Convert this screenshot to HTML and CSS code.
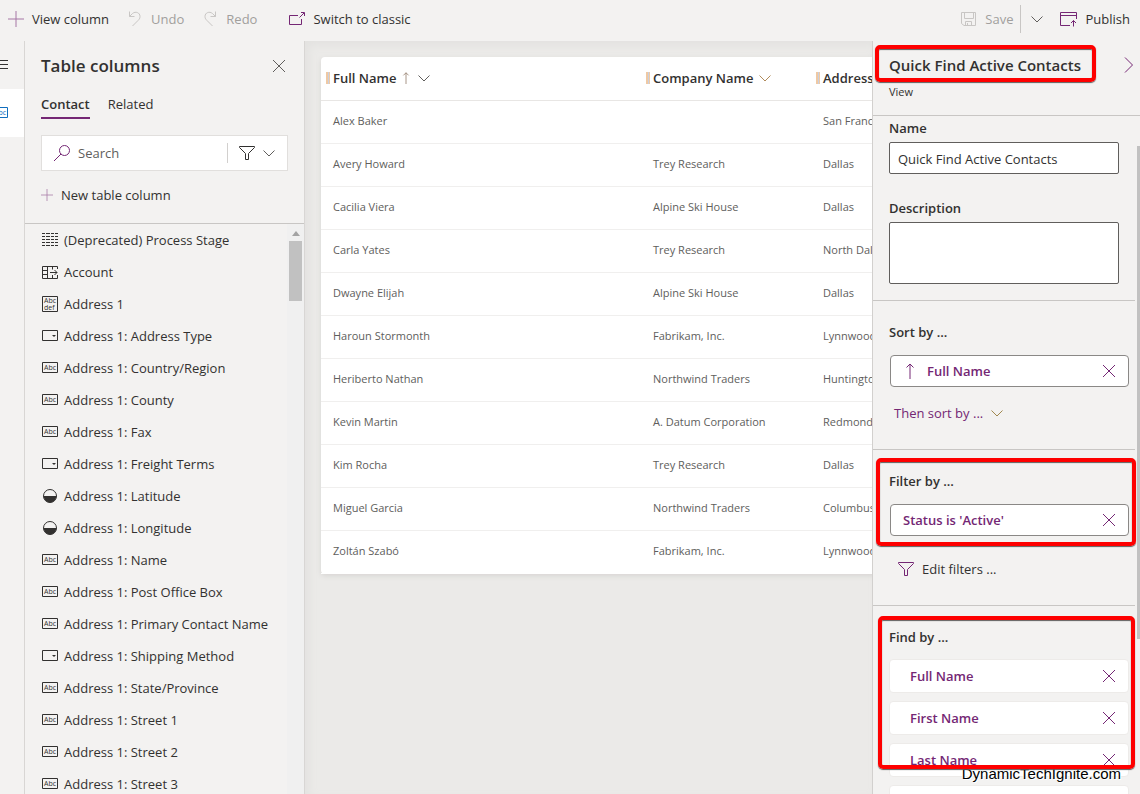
FILE: index.html
```
<!DOCTYPE html>
<html lang="en">
<head>
<meta charset="utf-8">
<title>Quick Find Active Contacts</title>
<link rel="stylesheet" href="styles.css">
</head>
<body>
<svg class="sprite" aria-hidden="true">
  <symbol id="plus" viewBox="0 0 16 16"><path d="M8 0v16M0 8h16"/></symbol>
  <symbol id="undo" viewBox="0 0 16 16"><path d="M2.500 0.500v5h5M2.500 5.500L5.500 2.500C8.500 0 13 1.500 13 5.500C13 7.500 12 8.500 11 9.500L5.500 15"/></symbol>
  <symbol id="redo" viewBox="0 0 16 16"><path d="M13.500 0.500v5h-5M13.500 5.500L10.500 2.500C7.500 0 3 1.500 3 5.500C3 7.500 4 8.500 5 9.500L10.500 15"/></symbol>
  <symbol id="popout" viewBox="0 0 16 16"><path d="M9 4.500H.5v9h12V8M10.500 6.500L15 2M12 1.500h3.500V5"/></symbol>
  <symbol id="save" viewBox="0 0 16 16"><path d="M.5 1.500h14v13H3l-2.500-2zM3.500 1.500v6h9v-6M4.500 14.500v-4h6v4M6.500 12v2.500"/></symbol>
  <symbol id="publish" viewBox="0 0 18 16"><path d="M10 14.500H.5v-13h16V8M.5 4.500h16M13.500 15.500V9.500M11 12l2.500-2.500L16 12"/></symbol>
  <symbol id="close" viewBox="0 0 12 12"><path d="M0 0l12 12M12 0L0 12"/></symbol>
  <symbol id="down" viewBox="0 0 12 12"><path d="M.5 3.500L6 9l5.500-5.500"/></symbol>
  <symbol id="right" viewBox="0 0 10 16"><path d="M1 .5L8.500 8 1 15.500"/></symbol>
  <symbol id="search" viewBox="0 0 16 16"><circle cx="10.500" cy="5.500" r="5"/><path d="M7 9L0 16"/></symbol>
  <symbol id="funnel" viewBox="0 0 16 16"><path d="M.5 1.500h15v1L9.500 8.500v6h-3v-6L.5 2.500z"/></symbol>
  <symbol id="up" viewBox="0 0 8 16"><path d="M4 16V1M.5 4.500L4 1l3.500 3.500"/></symbol>
  <symbol id="menu" viewBox="0 0 16 16"><path d="M0 3.500h16M0 7.500h16M0 11.500h16"/></symbol>
  <symbol id="stage" viewBox="0 0 16 16"><path stroke-dasharray="3 1 4 1 3 1 3 0" d="M0 1.500h16M0 4.500h16M0 7.500h16M0 10.500h16M0 13.500h16"/></symbol>
  <symbol id="lookup" viewBox="0 0 16 16"><path d="M15.500 5V2.500H.5v12h15V11M.5 6.500h5M.5 10.500h5M5.500 2.500v12M10.500 2.500v3M10.500 11v3.500M8 8.500h7M12.500 6l2.500 2.500-2.500 2.500"/></symbol>
  <symbol id="option" viewBox="0 0 16 16"><path d="M.5 2.500h15v10H.5z"/><path class="solid" d="M10 7h4l-2 2z"/></symbol>
  <symbol id="half" viewBox="0 0 16 16"><circle cx="8" cy="8" r="6.500"/><path class="solid" d="M1.500 8h13a6.500 6.500 0 0 1-13 0z"/></symbol>
  <symbol id="abc" viewBox="0 0 16 16"><path d="M.5 2.500h15v10H.5z"/><text x="2" y="10">Abc</text></symbol>
  <symbol id="abcdef" viewBox="0 0 16 16"><path d="M.5.500h15v15H.5z"/><text x="2" y="7">Abc</text><text x="2" y="14">def</text></symbol>
</svg>

<header class="commands">
  <button class="cmd"><svg class="i16 brand soft"><use href="#plus"/></svg>View column</button>
  <button class="cmd" disabled><svg class="i16"><use href="#undo"/></svg>Undo</button>
  <button class="cmd" disabled><svg class="i16"><use href="#redo"/></svg>Redo</button>
  <button class="cmd classic"><svg class="i16 brand"><use href="#popout"/></svg>Switch to classic</button>
  <span class="grow"></span>
  <button class="cmd save" disabled><svg class="i16"><use href="#save"/></svg>Save</button>
  <button class="cmd split" aria-label="Save options"><svg class="i12 thin"><use href="#down"/></svg></button>
  <button class="cmd publish"><svg class="i18 brand"><use href="#publish"/></svg>Publish</button>
</header>

<div class="workspace">
  <nav class="rail">
    <button aria-label="Menu"><svg class="i16"><use href="#menu"/></svg></button>
    <button class="current" aria-label="Columns"><svg class="i16"><use href="#abc"/></svg></button>
  </nav>

  <aside class="columns">
    <div class="columns-head">
      <div class="title-row">
        <h2>Table columns</h2>
        <button aria-label="Close"><svg class="i12 thin"><use href="#close"/></svg></button>
      </div>
      <div class="tabs"><button class="active">Contact</button><button>Related</button></div>
      <div class="search">
        <svg class="i16 brand"><use href="#search"/></svg>
        <input type="search" placeholder="Search" aria-label="Search">
        <button aria-label="Filter columns"><svg class="i16"><use href="#funnel"/></svg><svg class="i12 thin"><use href="#down"/></svg></button>
      </div>
      <button class="new"><svg class="i12 brand soft"><use href="#plus"/></svg>New table column</button>
    </div>
    <div class="list-area">
      <ul>
        <li><svg class="i16"><use href="#stage"/></svg>(Deprecated) Process Stage</li>
        <li><svg class="i16"><use href="#lookup"/></svg>Account</li>
        <li><svg class="i16"><use href="#abcdef"/></svg>Address 1</li>
        <li><svg class="i16"><use href="#option"/></svg>Address 1: Address Type</li>
        <li><svg class="i16"><use href="#abc"/></svg>Address 1: Country/Region</li>
        <li><svg class="i16"><use href="#abc"/></svg>Address 1: County</li>
        <li><svg class="i16"><use href="#abc"/></svg>Address 1: Fax</li>
        <li><svg class="i16"><use href="#option"/></svg>Address 1: Freight Terms</li>
        <li><svg class="i16"><use href="#half"/></svg>Address 1: Latitude</li>
        <li><svg class="i16"><use href="#half"/></svg>Address 1: Longitude</li>
        <li><svg class="i16"><use href="#abc"/></svg>Address 1: Name</li>
        <li><svg class="i16"><use href="#abc"/></svg>Address 1: Post Office Box</li>
        <li><svg class="i16"><use href="#abc"/></svg>Address 1: Primary Contact Name</li>
        <li><svg class="i16"><use href="#option"/></svg>Address 1: Shipping Method</li>
        <li><svg class="i16"><use href="#abc"/></svg>Address 1: State/Province</li>
        <li><svg class="i16"><use href="#abc"/></svg>Address 1: Street 1</li>
        <li><svg class="i16"><use href="#abc"/></svg>Address 1: Street 2</li>
        <li><svg class="i16"><use href="#abc"/></svg>Address 1: Street 3</li>
      </ul>
      <div class="scrollbar"><span class="arrow"></span><span class="thumb"></span></div>
    </div>
  </aside>

  <main class="canvas">
    <table class="grid">
      <colgroup><col class="c-name"><col class="c-company"><col class="c-city"></colgroup>
      <thead>
        <tr>
          <th><div class="th">Full Name<svg class="sort"><use href="#up"/></svg><svg class="i12 thin"><use href="#down"/></svg></div></th>
          <th><div class="th">Company Name<svg class="i12 amber"><use href="#down"/></svg></div></th>
          <th><div class="th">Address 1: City</div></th>
        </tr>
      </thead>
      <tbody>
        <tr><td>Alex Baker</td><td></td><td>San Francisco</td></tr>
        <tr><td>Avery Howard</td><td>Trey Research</td><td>Dallas</td></tr>
        <tr><td>Cacilia Viera</td><td>Alpine Ski House</td><td>Dallas</td></tr>
        <tr><td>Carla Yates</td><td>Trey Research</td><td>North Dallas</td></tr>
        <tr><td>Dwayne Elijah</td><td>Alpine Ski House</td><td>Dallas</td></tr>
        <tr><td>Haroun Stormonth</td><td>Fabrikam, Inc.</td><td>Lynnwood</td></tr>
        <tr><td>Heriberto Nathan</td><td>Northwind Traders</td><td>Huntington</td></tr>
        <tr><td>Kevin Martin</td><td>A. Datum Corporation</td><td>Redmond</td></tr>
        <tr><td>Kim Rocha</td><td>Trey Research</td><td>Dallas</td></tr>
        <tr><td>Miguel Garcia</td><td>Northwind Traders</td><td>Columbus</td></tr>
        <tr><td>Zoltán Szabó</td><td>Fabrikam, Inc.</td><td>Lynnwood</td></tr>
      </tbody>
    </table>
  </main>

  <aside class="props">
    <div class="props-head">
      <div class="title-row">
        <h1>Quick Find Active Contacts</h1>
        <button aria-label="Collapse"><svg class="chev brand"><use href="#right"/></svg></button>
      </div>
      <p>View</p>
      <span class="mark mark-title"></span>
    </div>
    <div class="props-body">
      <section class="fields">
        <label for="name">Name</label>
        <input id="name" type="text" value="Quick Find Active Contacts">
        <label for="desc">Description</label>
        <textarea id="desc"></textarea>
      </section>
      <section class="sorting">
        <h3>Sort by ...</h3>
        <div class="chip outlined"><svg class="sort"><use href="#up"/></svg><span>Full Name</span><button aria-label="Remove sort"><svg class="i12"><use href="#close"/></svg></button></div>
        <button class="then">Then sort by ...<svg class="i12 olive"><use href="#down"/></svg></button>
      </section>
      <section class="filtering">
        <h3>Filter by ...</h3>
        <div class="chip outlined status"><span>Status is 'Active'</span><button aria-label="Remove filter"><svg class="i12"><use href="#close"/></svg></button></div>
        <button class="edit"><svg class="i16 brand"><use href="#funnel"/></svg>Edit filters ...</button>
        <span class="mark mark-filter"></span>
      </section>
      <section class="finding">
        <h3>Find by ...</h3>
        <div class="chip"><span>Full Name</span><button aria-label="Remove Full Name"><svg class="i12"><use href="#close"/></svg></button></div>
        <div class="chip"><span>First Name</span><button aria-label="Remove First Name"><svg class="i12"><use href="#close"/></svg></button></div>
        <div class="chip"><span>Last Name</span><button aria-label="Remove Last Name"><svg class="i12"><use href="#close"/></svg></button></div>
        <div class="chip"></div>
        <span class="watermark">DynamicTechIgnite.com</span>
        <span class="mark mark-find"></span>
      </section>
      <span class="page-thumb"></span>
    </div>
  </aside>
</div>
</body>
</html>
```
FILE: styles.css
```
*, *::before { box-sizing: border-box; }
html, body { height: 100%; }
body {
  margin: 0;
  display: flex;
  flex-direction: column;
  overflow: hidden;
  background: #f3f2f1;
  color: #323130;
  font: 13px/20px "Open Sans", "Noto Sans", sans-serif;
}
h1, h2, h3, p, ul { margin: 0; padding: 0; }
button {
  display: flex;
  align-items: center;
  padding: 0;
  border: 0;
  background: none;
  color: inherit;
  font: inherit;
}
svg { flex: none; fill: none; stroke: currentColor; stroke-width: 1; }
svg text, symbol text { fill: currentColor; stroke: none; font: 7px "Open Sans", sans-serif; }
.solid { fill: currentColor; stroke: none; }
.sprite { display: none; }
.i12 { width: 12px; height: 12px; }
.i16 { width: 16px; height: 16px; }
.i18 { width: 18px; height: 16px; }
.sort { width: 8px; height: 16px; }
.chev { width: 10px; height: 16px; }
.thin { color: #605e5c; }
.brand { color: #742774; }
.soft { opacity: .6; }
.amber { color: #b08a5a; }
.olive { color: #a08850; }
.grow { flex: 1; }

/* Command bar */
.commands {
  flex: none;
  display: flex;
  align-items: center;
  gap: 18px;
  height: 41px;
  padding: 0 10px 3px 8px;
}
.cmd { gap: 8px; height: 28px; }
.cmd:disabled { color: #a19f9d; }
.cmd:disabled svg { color: #c8c6c4; }
.classic { margin-left: 14px; }
.save { padding-right: 6px; border-right: 1px solid #c8c6c4; }
.split { margin-left: -8px; }
.publish { margin-left: -1px; }

.workspace { flex: 1; display: flex; min-height: 0; }

/* Left rail */
.rail { flex: none; width: 24px; overflow: hidden; }
.rail button { width: 24px; height: 48px; }
.rail svg { margin-left: -8px; }
.rail .current { background: #fff; color: #106ebe; }

/* Table columns panel */
.columns {
  flex: none;
  display: flex;
  flex-direction: column;
  width: 281px;
  border: solid #d8d6d4;
  border-width: 0 1px;
}
.columns-head { padding: 13px 16px 18px; border-bottom: 1px solid #c8c6c4; }
.title-row { display: flex; justify-content: space-between; align-items: center; }
h2 { font-size: 17px; line-height: 24px; font-weight: 600; }
.columns .title-row button { padding-right: 3px; }
.tabs { display: flex; gap: 18px; margin-top: 16px; }
.tabs button { height: 25px; padding-bottom: 3px; border-bottom: 2px solid transparent; }
.tabs .active { font-weight: 600; border-color: #742774; }
.search {
  display: flex;
  align-items: center;
  height: 36px;
  margin-top: 16px;
  padding-left: 12px;
  border: 1px solid #e1dfdd;
  background: #fff;
}
.search input {
  flex: 1;
  min-width: 0;
  padding: 0 8px;
  border: 0;
  background: none;
  font: inherit;
}
.search input::placeholder { color: #605e5c; opacity: 1; }
.search button { gap: 8px; height: 20px; padding: 0 12px 0 11px; border-left: 1px solid #d2d0ce; }
.new { gap: 8px; margin-top: 14px; }
.list-area { flex: 1; display: flex; min-height: 0; overflow: hidden; }
.list-area ul { flex: 1; list-style: none; }
.list-area li { display: flex; align-items: center; gap: 6px; height: 32px; padding-left: 17px; white-space: nowrap; }
.scrollbar { display: flex; flex-direction: column; align-items: center; gap: 4px; width: 17px; padding-top: 7px; background: #f0f0f0; }
.arrow { border: 4px solid transparent; border-bottom: 5px solid #a3a3a3; border-top: 0; margin-bottom: 1px; }
.thumb { width: 13px; height: 60px; background: #c1c1c1; }

/* Results grid */
.canvas { flex: 1; min-width: 0; overflow: hidden; padding: 16px 0 0 16px; background: #ebeae8; box-shadow: inset 4px 4px 8px #e3e2e0; }
.grid {
  width: 640px;
  table-layout: fixed;
  border-collapse: separate;
  border-spacing: 0;
  border-radius: 4px;
  background: #fff;
  box-shadow: 0 2px 5px #d8d6d4;
}
.c-name { width: 320px; }
.c-company { width: 170px; }
.grid th { height: 44px; padding: 0 0 2px 5px; border-bottom: 1px solid #e8e6e4; text-align: left; font-weight: 600; white-space: nowrap; }
.th { display: flex; align-items: center; gap: 6px; }
.th::before { content: ""; width: 4px; height: 12px; margin-right: -3px; border: solid #efc9a4; border-width: 0 1px 0 2px; background: #c8cfdf; }
.th .sort { height: 12px; margin-right: 2px; color: #8b7460; }
.grid td { height: 43px; padding: 0 0 2px 12px; border-bottom: 1px solid #f0efee; color: #605e5c; font-size: 11px; line-height: 16px; white-space: nowrap; }
.grid tr:last-child td { border-color: #fff; }

/* View properties */
.props { flex: none; display: flex; flex-direction: column; width: 268px; border-left: 1px solid #d2d0ce; }
.props-head { position: relative; height: 75px; padding: 12px 6px 0 16px; border-bottom: 1px solid #c8c6c4; }
h1 { font-size: 15px; line-height: 24px; font-weight: 600; white-space: nowrap; }
.props-head p { margin-top: 7px; font-size: 11px; line-height: 16px; }
.props-body { position: relative; flex: 1; min-height: 0; padding-right: 5px; }
section { position: relative; padding: 0 6px 0 16px; border-bottom: 1px solid #c8c6c4; }
.fields { display: flex; flex-direction: column; padding: 2px 16px 16px; }
label, h3 { font-size: 13px; line-height: 20px; font-weight: 600; }
.fields label { margin-bottom: 4px; }
.fields input, .fields textarea {
  height: 32px;
  padding: 2px 8px 0;
  border: 1px solid #605e5c;
  border-radius: 2px;
  background: #fff;
  color: inherit;
  font: inherit;
  resize: none;
}
.fields input { margin-bottom: 24px; }
.fields textarea { height: 62px; }
section h3 { padding-top: 21px; margin-bottom: 13px; }
.chip {
  display: flex;
  align-items: center;
  height: 34px;
  margin-bottom: 8px;
  padding: 0 13px 0 20px;
  border: 1px solid #edebe9;
  border-radius: 4px;
  background: #fff;
  color: #742774;
  font-weight: 600;
}
.chip span { flex: 1; }
.outlined { height: 32px; margin-left: 1px; padding: 0 13px 0 15px; border-color: #8a8886; }
.outlined .sort { margin-right: 13px; }
.status { padding-left: 12px; }
.sorting { padding-bottom: 26px; }
.then { gap: 8px; margin: 16px 0 0 5px; color: #742774; }
.filtering { padding-bottom: 26px; }
.edit { gap: 8px; margin: 23px 0 0 9px; }
.finding { border-bottom: 0; }
.finding h3 { margin-bottom: 12px; }
.page-thumb { position: absolute; top: 30px; right: 0; width: 3px; height: 493px; background: #c1c1c1; }

/* Callouts drawn over the panel */
.mark { position: absolute; border: 4px solid #fe0000; border-radius: 5px; box-shadow: 0 1px 1px #605e5c, inset 0 1px 1px #605e5c; pointer-events: none; }
.mark-title { top: 4px; left: 2px; width: 221px; height: 37px; }
.mark-filter { top: 8px; left: 3px; right: -1px; height: 88px; }
.mark-find { top: 10px; left: 5px; right: 0; height: 153px; }
.watermark {
  position: absolute;
  top: 158px;
  right: 14px;
  color: #000;
  font: 15px/20px "Liberation Sans", sans-serif;
  text-shadow: 1px 1px 0 #fff, -1px -1px 0 #fff;
}
```
